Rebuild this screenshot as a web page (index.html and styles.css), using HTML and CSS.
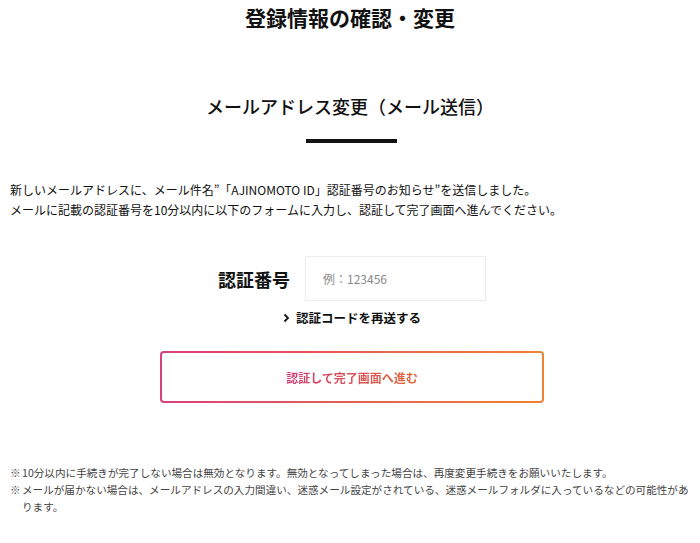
FILE: index.html
```html
<!DOCTYPE html>
<html lang="ja">
<head>
    <meta charset="UTF-8">
    <meta name="viewport" content="width=device-width, initial-scale=1.0">
    <title>登録情報の確認・変更</title>
    <link rel="stylesheet" href="styles.css">
</head>
<body>
    <div class="page">
        <h1 class="page-title">登録情報の確認・変更</h1>

        <h2 class="section-title">メールアドレス変更（メール送信）</h2>
        <div class="section-bar"></div>

        <p class="lead">
            新しいメールアドレスに、メール件名”「AJINOMOTO ID」認証番号のお知らせ”を送信しました。<br>
            メールに記載の認証番号を10分以内に以下のフォームに入力し、認証して完了画面へ進んでください。
        </p>

        <form class="verify-form" onsubmit="return false;">
            <div class="field">
                <label class="field-label" for="code">認証番号</label>
                <input class="field-input" id="code" type="text" placeholder="例：123456">
            </div>
            <a href="#" class="resend-link">
                <svg class="chevron" width="7" height="10" viewBox="0 0 7 10"><path d="M1.5 1.5 L5 5 L1.5 8.5" fill="none" stroke="#111" stroke-width="1.8"/></svg>
                認証コードを再送する
            </a>
            <button type="submit" class="submit-btn"><span>認証して完了画面へ進む</span></button>
        </form>

        <ul class="notes">
            <li>10分以内に手続きが完了しない場合は無効となります。無効となってしまった場合は、再度変更手続きをお願いいたします。</li>
            <li>メールが届かない場合は、メールアドレスの入力間違い、迷惑メール設定がされている、迷惑メールフォルダに入っているなどの可能性があります。</li>
        </ul>
    </div>
</body>
</html>
```

FILE: styles.css
```css
* { box-sizing: border-box; }
body {
    margin: 0;
    background: #fff;
    color: #111;
    font-family: "Noto Sans CJK JP", "Noto Sans", sans-serif;
}
.page {
    padding: 0 10px;
    display: flex;
    flex-direction: column;
}
.page-title {
    margin: 2px 0 0;
    text-align: center;
    font-size: 21px;
    line-height: 30px;
    font-weight: 700;
}
.section-title {
    margin: 61px 0 0;
    text-align: center;
    font-size: 18px;
    line-height: 26px;
    font-weight: 500;
}
.section-bar {
    width: 91px;
    height: 4px;
    background: #111;
    margin: 20px auto 0;
    position: relative;
    left: 1px;
}
.lead {
    margin: 37px 0 0;
    font-size: 12px;
    line-height: 20px;
}
.verify-form {
    display: flex;
    flex-direction: column;
    align-items: center;
    margin-top: 36px;
}
.field {
    display: flex;
    align-items: center;
    gap: 15px;
    margin-left: 4px;
}
.field-label {
    font-size: 18px;
    font-weight: 700;
    line-height: 26px;
}
.field-input {
    width: 181px;
    height: 45px;
    border: 1px solid #ececec;
    padding: 0 17px;
    font-family: "Noto Sans CJK JP", "Noto Sans", sans-serif;
    font-size: 12px;
    color: #333;
    outline: none;
}
.field-input::placeholder {
    color: #8a8a8a;
}
.resend-link {
    margin-top: 8px;
    margin-left: 4px;
    display: flex;
    align-items: center;
    gap: 6px;
    font-size: 12.5px;
    line-height: 18px;
    font-weight: 700;
    color: #111;
    text-decoration: none;
}
.submit-btn {
    margin-top: 24px;
    margin-left: 4px;
    width: 384px;
    height: 52px;
    border: 2px solid transparent;
    border-radius: 4px;
    background: linear-gradient(#fff, #fff) padding-box,
                linear-gradient(90deg, #d8407d 0%, #e8624f 55%, #ef8234 100%) border-box;
    font-family: "Noto Sans CJK JP", "Noto Sans", sans-serif;
    font-size: 12px;
    font-weight: 700;
    cursor: pointer;
}
.submit-btn span {
    background: linear-gradient(90deg, #d13b72, #e2673c);
    -webkit-background-clip: text;
    background-clip: text;
    color: transparent;
}
.notes {
    list-style: none;
    margin: 61px 0 0;
    padding: 0;
    font-size: 10.6px;
    line-height: 17px;
    color: #444;
}
.notes li {
    padding-left: 12px;
    text-indent: -12px;
}
.notes li::before {
    content: "※";
    display: inline-block;
    width: 12px;
    text-indent: 0;
}
```
